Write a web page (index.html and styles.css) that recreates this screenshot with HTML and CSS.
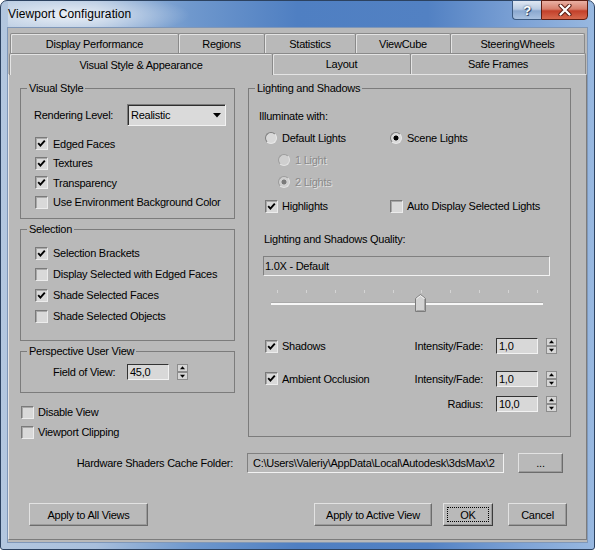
FILE: index.html
```html
<!DOCTYPE html>
<html lang="en">
<head>
<meta charset="utf-8">
<title>Viewport Configuration</title>
<link rel="stylesheet" href="styles.css">
</head>
<body>
<div class="window">
  <div class="titlebar">
    <div class="title">Viewport Configuration</div>
    <div class="caption">
      <div class="cap-btn help">?</div>
      <div class="cap-btn close"><svg width="14" height="12" viewBox="0 0 14 12"><path d="M2.5 1.5 L11.5 10.5 M11.5 1.5 L2.5 10.5" stroke="#5a1e14" stroke-width="4.2" stroke-linecap="round"/><path d="M2.5 1.5 L11.5 10.5 M11.5 1.5 L2.5 10.5" stroke="#ffffff" stroke-width="2.2" stroke-linecap="round"/></svg></div>
    </div>
  </div>
  <div class="client">
    <div class="tabs">
      <div class="tab-row row1">
        <div class="tab w-dp">Display Performance</div>
        <div class="tab w-reg">Regions</div>
        <div class="tab w-stat">Statistics</div>
        <div class="tab w-vc">ViewCube</div>
        <div class="tab w-sw">SteeringWheels</div>
      </div>
      <div class="tab-row row2">
        <div class="tab active w-vs">Visual Style &amp; Appearance</div>
        <div class="tab w-lay">Layout</div>
        <div class="tab w-sf">Safe Frames</div>
      </div>
    </div>
    <div class="page">
      <div class="columns">
        <div class="col-left">
          <div class="group g-visual">
            <span class="legend">Visual Style</span>
            <div class="render-row">
              <span class="render-label">Rendering Level:</span>
              <div class="dropdown"><span>Realistic</span><svg width="8" height="5" viewBox="0 0 8 5"><path d="M0 0 H8 L4 4.5 Z" fill="#000"/></svg></div>
            </div>
            <div class="cb-list vs-list">
              <div class="cb"><span class="box"><svg width="9" height="9" viewBox="0 0 9 9"><path d="M1.2 4.2 L3.4 6.6 L7.8 1.6" fill="none" stroke="#000" stroke-width="1.9"/></svg></span><span class="cb-text">Edged Faces</span></div>
              <div class="cb"><span class="box"><svg width="9" height="9" viewBox="0 0 9 9"><path d="M1.2 4.2 L3.4 6.6 L7.8 1.6" fill="none" stroke="#000" stroke-width="1.9"/></svg></span><span class="cb-text">Textures</span></div>
              <div class="cb"><span class="box"><svg width="9" height="9" viewBox="0 0 9 9"><path d="M1.2 4.2 L3.4 6.6 L7.8 1.6" fill="none" stroke="#000" stroke-width="1.9"/></svg></span><span class="cb-text">Transparency</span></div>
              <div class="cb"><span class="box"></span><span class="cb-text">Use Environment Background Color</span></div>
            </div>
          </div>
          <div class="group g-sel">
            <span class="legend">Selection</span>
            <div class="cb-list sel-list">
              <div class="cb"><span class="box"><svg width="9" height="9" viewBox="0 0 9 9"><path d="M1.2 4.2 L3.4 6.6 L7.8 1.6" fill="none" stroke="#000" stroke-width="1.9"/></svg></span><span class="cb-text">Selection Brackets</span></div>
              <div class="cb"><span class="box"></span><span class="cb-text">Display Selected with Edged Faces</span></div>
              <div class="cb"><span class="box"><svg width="9" height="9" viewBox="0 0 9 9"><path d="M1.2 4.2 L3.4 6.6 L7.8 1.6" fill="none" stroke="#000" stroke-width="1.9"/></svg></span><span class="cb-text">Shade Selected Faces</span></div>
              <div class="cb"><span class="box"></span><span class="cb-text">Shade Selected Objects</span></div>
            </div>
          </div>
          <div class="group g-persp">
            <span class="legend">Perspective User View</span>
            <div class="fov-row">
              <span class="fov-label">Field of View:</span>
              <div class="num">45,0</div>
              <svg class="spin" width="11" height="16" viewBox="0 0 11 16"><rect x="0.5" y="0.5" width="10" height="7" fill="#d6d6d6" stroke="#8c8c8c"/><rect x="0.5" y="8.5" width="10" height="7" fill="#d6d6d6" stroke="#8c8c8c"/><path d="M5.5 2.2 L8 5.2 L3 5.2 Z" fill="#000"/><path d="M3 10.8 L8 10.8 L5.5 13.8 Z" fill="#000"/></svg>
            </div>
          </div>
          <div class="cb-list loose">
            <div class="cb tight"><span class="box"></span><span class="cb-text">Disable View</span></div>
            <div class="cb tight"><span class="box"></span><span class="cb-text">Viewport Clipping</span></div>
          </div>
        </div>
        <div class="col-right">
          <div class="group g-light">
            <span class="legend">Lighting and Shadows</span>
            <div class="row22">Illuminate with:</div>
            <div class="row22 radio-row">
              <div class="ritem first"><span class="radio"></span><span>Default Lights</span></div>
              <div class="ritem"><span class="radio on"></span><span>Scene Lights</span></div>
            </div>
            <div class="row22 sub-row">
              <div class="ritem disabled"><span class="radio"></span><span>1 Light</span></div>
            </div>
            <div class="row22 sub-row">
              <div class="ritem disabled"><span class="radio on"></span><span>2 Lights</span></div>
            </div>
            <div class="row22 hl-row">
              <div class="cb tight first"><span class="box"><svg width="9" height="9" viewBox="0 0 9 9"><path d="M1.2 4.2 L3.4 6.6 L7.8 1.6" fill="none" stroke="#000" stroke-width="1.9"/></svg></span><span class="cb-text">Highlights</span></div>
              <div class="cb tight"><span class="box"></span><span class="cb-text">Auto Display Selected Lights</span></div>
            </div>
            <div class="q-label">Lighting and Shadows Quality:</div>
            <div class="q-box">1.0X - Default</div>
            <div class="slider">
              <div class="ticks"><i></i><i></i><i></i><i></i><i></i><i></i><i></i><i></i><i></i><i></i></div>
              <div class="track"></div>
              <svg class="thumb" width="11" height="18" viewBox="0 0 11 18"><path d="M0.5 4.5 L5.5 0.5 L10.5 4.5 V17.5 H0.5 Z" fill="#d2d2d2" stroke="#7c7c7c"/><path d="M1.5 4.8 L5.5 1.6 L9.5 4.8" fill="none" stroke="#f4f4f4"/><path d="M1.5 16.5 H9.5 V5" fill="none" stroke="#a4a4a4"/></svg>
            </div>
            <div class="opt-row sh-row">
              <div class="cb tight"><span class="box"><svg width="9" height="9" viewBox="0 0 9 9"><path d="M1.2 4.2 L3.4 6.6 L7.8 1.6" fill="none" stroke="#000" stroke-width="1.9"/></svg></span><span class="cb-text">Shadows</span></div>
              <div class="field">
                <span class="field-label">Intensity/Fade:</span>
                <div class="num">1,0</div>
                <svg class="spin" width="11" height="16" viewBox="0 0 11 16"><rect x="0.5" y="0.5" width="10" height="7" fill="#d6d6d6" stroke="#8c8c8c"/><rect x="0.5" y="8.5" width="10" height="7" fill="#d6d6d6" stroke="#8c8c8c"/><path d="M5.5 2.2 L8 5.2 L3 5.2 Z" fill="#000"/><path d="M3 10.8 L8 10.8 L5.5 13.8 Z" fill="#000"/></svg>
              </div>
            </div>
            <div class="opt-row ao-row">
              <div class="cb tight"><span class="box"><svg width="9" height="9" viewBox="0 0 9 9"><path d="M1.2 4.2 L3.4 6.6 L7.8 1.6" fill="none" stroke="#000" stroke-width="1.9"/></svg></span><span class="cb-text">Ambient Occlusion</span></div>
              <div class="field">
                <span class="field-label">Intensity/Fade:</span>
                <div class="num">1,0</div>
                <svg class="spin" width="11" height="16" viewBox="0 0 11 16"><rect x="0.5" y="0.5" width="10" height="7" fill="#d6d6d6" stroke="#8c8c8c"/><rect x="0.5" y="8.5" width="10" height="7" fill="#d6d6d6" stroke="#8c8c8c"/><path d="M5.5 2.2 L8 5.2 L3 5.2 Z" fill="#000"/><path d="M3 10.8 L8 10.8 L5.5 13.8 Z" fill="#000"/></svg>
              </div>
            </div>
            <div class="opt-row rad-row">
              <div class="field">
                <span class="field-label">Radius:</span>
                <div class="num">10,0</div>
                <svg class="spin" width="11" height="16" viewBox="0 0 11 16"><rect x="0.5" y="0.5" width="10" height="7" fill="#d6d6d6" stroke="#8c8c8c"/><rect x="0.5" y="8.5" width="10" height="7" fill="#d6d6d6" stroke="#8c8c8c"/><path d="M5.5 2.2 L8 5.2 L3 5.2 Z" fill="#000"/><path d="M3 10.8 L8 10.8 L5.5 13.8 Z" fill="#000"/></svg>
              </div>
            </div>
          </div>
        </div>
      </div>
      <div class="hw-row">
        <span class="hw-label">Hardware Shaders Cache Folder:</span>
        <div class="path">C:\Users\Valeriy\AppData\Local\Autodesk\3dsMax\2</div>
        <div class="btn browse">...</div>
      </div>
      <div class="btn-row">
        <div class="btn b-all">Apply to All Views</div>
        <div class="btn b-active">Apply to Active View</div>
        <div class="btn b-ok"><span class="focus">OK</span></div>
        <div class="btn b-cancel">Cancel</div>
      </div>
    </div>
  </div>
</div>
</body>
</html>
```
FILE: styles.css
```css
* { box-sizing: border-box; }
html, body { margin: 0; padding: 0; }
body {
  width: 595px;
  height: 550px;
  overflow: hidden;
  background: #ffffff;
  font-family: "Liberation Sans", Arial, sans-serif;
  font-size: 11px;
  letter-spacing: -0.25px;
  color: #000;
}

/* window frame */
.window {
  width: 595px;
  height: 550px;
  display: flex;
  flex-direction: column;
  padding: 0 7px 7px 7px;
  border: 1px solid #2c4260;
  border-radius: 7px 7px 3px 3px;
  background: linear-gradient(to right, #b3c7df 0%, #a8bfdc 16%, #6f98cd 32%, #4f7fc2 50%, #5281c3 72%, #7ea3d6 88%, #98b8e0 100%);
}
.titlebar {
  height: 27px;
  display: flex;
  align-items: flex-start;
  margin-right: -1px;
  background: radial-gradient(ellipse 120px 22px at 62px 14px, rgba(255,255,255,0.75), rgba(255,255,255,0));
}
.title {
  margin-top: 6px;
  line-height: 14px;
  font-size: 12px;
  letter-spacing: 0.1px;
  color: #000;
}
.caption {
  margin-left: auto;
  margin-top: -1px;
  display: flex;
}
.cap-btn {
  height: 20px;
  display: flex;
  align-items: center;
  justify-content: center;
}
.help {
  width: 29px;
  border: 1px solid #3c5a80;
  border-right: none;
  border-radius: 0 0 0 4px;
  background: linear-gradient(to bottom, #dfe8f3 0%, #b9cbe2 45%, #8ba8cf 55%, #a9c1e0 100%);
  color: #fff;
  font-weight: bold;
  font-size: 13px;
  text-shadow: 0 0 2px #2a4060, 1px 1px 0 #3a5070;
}
.close {
  width: 47px;
  border: 1px solid #5e1e12;
  border-radius: 0 0 4px 0;
  background: linear-gradient(to bottom, #eab1a4 0%, #d77f6c 45%, #c3402a 55%, #d6694e 100%);
}

/* client */
.client {
  flex: 1;
  display: flex;
  flex-direction: column;
  background: #b9b9b9;
  box-shadow: 0 0 0 1px #7f97b8;
}
.tabs { padding: 5px 0 0 2px; }
.tab-row { display: flex; align-items: flex-start; }
.row1 { height: 20px; }
.row2 { height: 21px; margin-left: -1px; }
.tab {
  height: 100%;
  display: flex;
  align-items: center;
  justify-content: center;
  margin-left: -1px;
  border: 1px solid #8a8a8a;
  border-bottom: none;
  border-radius: 2px 2px 0 0;
  box-shadow: inset 1px 1px 0 #e4e4e4;
  background: #b9b9b9;
}
.tab-row .tab:first-child { margin-left: 0; }
.tab.active {
  height: 22px;
  position: relative;
  z-index: 1;
}
.w-dp { width: 169px; }
.w-reg { width: 87px; }
.w-stat { width: 92px; }
.w-vc { width: 96px; }
.w-sw { width: 135px; }
.w-vs { width: 264px; }
.w-lay { width: 139px; }
.w-sf { width: 176px; }

.page {
  flex: 1;
  margin-bottom: 2px;
  padding-left: 11px;
  border: 1px solid;
  border-color: #e4e4e4 #7c7c7c #7c7c7c #e4e4e4;
}
.columns {
  display: flex;
  gap: 13px;
  align-items: flex-start;
}
.col-left { width: 215px; display: flex; flex-direction: column; }
.col-right { width: 323px; display: flex; flex-direction: column; }

/* group boxes */
.group {
  position: relative;
  border: 1px solid #7c7c7c;
}
.legend {
  position: absolute;
  top: -7px;
  left: 6px;
  padding: 0 2px;
  line-height: 13px;
  background: #b9b9b9;
}
.g-visual { margin-top: 13px; height: 131px; padding: 15px 0 0 13px; }
.g-sel { margin-top: 10px; height: 112px; padding: 12.5px 0 0 14px; }
.g-persp { margin-top: 10px; height: 42px; padding: 12px 0 0 32px; }
.g-light { margin-top: 13px; height: 349px; padding: 16px 13px 0 10px; }

.render-row { display: flex; align-items: center; height: 22px; }
.render-label { width: 93px; }
.dropdown {
  width: 99px;
  height: 22px;
  display: flex;
  align-items: center;
  justify-content: space-between;
  padding: 0 4px 0 3px;
  border: 1px solid;
  border-color: #7a7a7a #f2f2f2 #f2f2f2 #7a7a7a;
  box-shadow: inset 1px 1px 0 #2e2e2e;
  background: #dadada;
}

/* checkboxes */
.cb { display: flex; align-items: center; }
.box {
  width: 13px;
  height: 13px;
  flex: none;
  display: flex;
  align-items: center;
  justify-content: center;
  border: 1px solid;
  border-color: #7a7a7a #ececec #ececec #7a7a7a;
  box-shadow: inset 1px 1px 0 #a8a8a8;
  background: #d9d9d9;
}
.cb-text { margin-left: 5px; }
.cb.tight .cb-text { margin-left: 4px; }
.vs-list { margin-top: 8px; padding-left: 1px; }
.vs-list .cb { height: 19.5px; }
.sel-list .cb { height: 21px; }
.loose { margin-top: 9px; padding-left: 1px; }
.loose .cb { height: 20px; }

/* numeric fields */
.fov-row { display: flex; align-items: center; height: 16px; }
.fov-label { width: 74px; }
.num {
  width: 42px;
  height: 16px;
  line-height: 14px;
  padding-left: 2px;
  border: 1px solid;
  border-color: #333333 #f2f2f2 #f2f2f2 #333333;
  background: #d8d8d8;
}
.spin { margin-left: 8px; display: block; flex: none; }

/* lighting */
.row22 { height: 22px; display: flex; align-items: center; }
.radio-row { padding-left: 6px; }
.ritem { display: flex; align-items: center; }
.ritem.first { width: 125px; }
.radio {
  width: 12px;
  height: 12px;
  margin-right: 5px;
  border-radius: 50%;
  border: 1px solid;
  border-color: #7e7e7e #e8e8e8 #e8e8e8 #7e7e7e;
  background: #d9d9d9;
}
.radio.on { background: radial-gradient(circle, #000 0, #000 2.2px, #d9d9d9 2.8px); }
.sub-row { padding-left: 19px; }
.ritem.disabled { color: #8a8a8a; text-shadow: 1px 1px 0 #e2e2e2; }
.ritem.disabled .radio { border-color: #9c9c9c #e2e2e2 #e2e2e2 #9c9c9c; background: #cfcfcf; }
.ritem.disabled .radio.on { background: radial-gradient(circle, #7a7a7a 0, #7a7a7a 2.2px, #cfcfcf 2.8px); }
.hl-row { margin-top: 2px; padding-left: 6px; }
.hl-row .cb.first { width: 125px; }
.q-label { margin-top: 12px; height: 20px; display: flex; align-items: center; padding-left: 5px; }
.q-box {
  margin-top: 7px;
  margin-left: 4px;
  width: 287px;
  height: 20px;
  line-height: 18px;
  padding-left: 1px;
  border: 1px solid;
  border-color: #808080 #f2f2f2 #f2f2f2 #808080;
}
.slider {
  position: relative;
  margin-left: 12px;
  width: 272px;
  height: 40px;
  padding-top: 14px;
}
.ticks {
  height: 3px;
  display: flex;
  justify-content: space-between;
  padding: 0 5px 0 6px;
}
.ticks i { display: block; width: 1px; height: 3px; background: #d4d4d4; }
.track {
  margin-top: 9px;
  height: 3px;
  background: #f7f7f7;
  border-top: 1px solid #a9a9a9;
}
.thumb { position: absolute; left: 144px; top: 18px; }

.opt-row { height: 22px; display: flex; align-items: center; padding-left: 6px; }
.sh-row { margin-top: 19px; }
.ao-row { margin-top: 10.5px; }
.rad-row { margin-top: 3.5px; }
.field { margin-left: auto; display: flex; align-items: center; }
.field-label { margin-right: 13px; }

/* bottom */
.hw-row { display: flex; align-items: center; height: 20px; margin-top: 11px; }
.hw-label { margin-left: 55px; width: 158px; text-align: right; white-space: nowrap; }
.path {
  margin-left: 14px;
  width: 257px;
  height: 20px;
  line-height: 18px;
  padding-left: 5px;
  white-space: nowrap;
  overflow: hidden;
  border: 1px solid;
  border-color: #808080 #f2f2f2 #f2f2f2 #808080;
}
.btn {
  display: flex;
  align-items: center;
  justify-content: center;
  border: 1px solid;
  border-color: #e2e2e2 #6c6c6c #6c6c6c #e2e2e2;
  box-shadow: inset -1px -1px 0 #9a9a9a;
  background: #b9b9b9;
}
.browse { margin-left: 14px; width: 45px; height: 20px; }
.btn-row { display: flex; height: 23px; margin-top: 30px; }
.b-all { margin-left: 9px; width: 119px; }
.b-active { margin-left: 166px; width: 118px; }
.b-ok { margin-left: 11px; width: 50px; border-color: #e2e2e2 #3c3c3c #3c3c3c #e2e2e2; padding: 3px; }
.b-ok .focus {
  width: 100%;
  height: 100%;
  display: flex;
  align-items: center;
  justify-content: center;
  border: 1px dotted #000;
}
.b-cancel { margin-left: 15px; width: 59px; }
```
